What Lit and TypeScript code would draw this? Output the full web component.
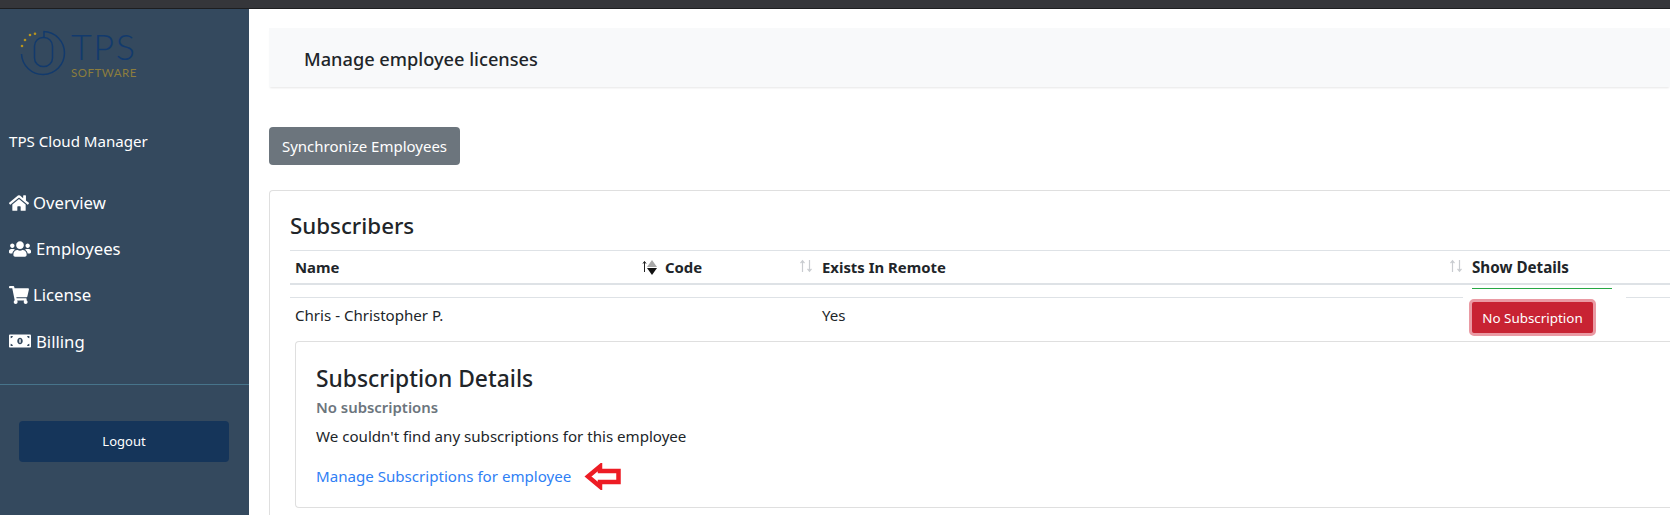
import { LitElement, html, css, svg } from "lit";
import { customElement } from "lit/decorators.js";

const home = svg`<path d="M280.37 148.26L96 300.11V464a16 16 0 0 0 16 16l112.06-.29a16 16 0 0 0 15.92-16V368a16 16 0 0 1 16-16h64a16 16 0 0 1 16 16v95.64a16 16 0 0 0 16 16.05L464 480a16 16 0 0 0 16-16V300L295.67 148.26a12.19 12.19 0 0 0-15.3 0zM571.6 251.47L488 182.56V44.05a12 12 0 0 0-12-12h-56a12 12 0 0 0-12 12v72.61L318.47 43a48 48 0 0 0-61 0L4.34 251.47a12 12 0 0 0-1.6 16.9l25.5 31A12 12 0 0 0 45.15 301l235.22-193.74a12.19 12.19 0 0 1 15.3 0L530.9 301a12 12 0 0 0 16.9-1.6l25.5-31a12 12 0 0 0-1.7-16.93z"/>`;
const users = svg`<path d="M96 224c35.3 0 64-28.7 64-64s-28.7-64-64-64-64 28.7-64 64 28.7 64 64 64zm448 0c35.3 0 64-28.7 64-64s-28.7-64-64-64-64 28.7-64 64 28.7 64 64 64zm32 32h-64c-17.6 0-33.5 7.1-45.1 18.6 40.3 22.1 68.9 62 75.1 109.4h66c17.7 0 32-14.3 32-32v-32c0-35.3-28.7-64-64-64zm-256 0c61.9 0 112-50.1 112-112S381.9 32 320 32 208 82.1 208 144s50.1 112 112 112zm76.8 32h-8.3c-20.8 10-43.9 16-68.5 16s-47.6-6-68.5-16h-8.3C179.6 288 128 339.6 128 403.2V432c0 26.5 21.5 48 48 48h288c26.5 0 48-21.5 48-48v-28.8c0-63.6-51.6-115.2-115.2-115.2zm-223.7-13.4C161.5 263.1 145.6 256 128 256H64c-35.3 0-64 28.7-64 64v32c0 17.7 14.3 32 32 32h65.9c6.3-47.4 34.9-87.3 75.2-109.4z"/>`;
const cart = svg`<path d="M528.12 301.319l47.273-208C578.806 78.301 567.391 64 551.99 64H159.208l-9.166-44.81C147.758 8.021 137.93 0 126.529 0H24C10.745 0 0 10.745 0 24v16c0 13.255 10.745 24 24 24h69.883l70.248 343.435C147.325 417.1 136 435.222 136 456c0 30.928 25.072 56 56 56s56-25.072 56-56c0-15.674-6.447-29.835-16.824-40h209.647C430.447 426.165 424 440.326 424 456c0 30.928 25.072 56 56 56s56-25.072 56-56c0-22.172-12.888-41.332-31.579-50.405l5.517-24.276c3.413-15.018-8.002-29.319-23.403-29.319H218.117l-6.545-32h293.145c11.206 0 20.92-7.754 23.403-18.681z"/>`;
const money = svg`<path d="M608 64H32C14.33 64 0 78.33 0 96v320c0 17.67 14.33 32 32 32h576c17.67 0 32-14.33 32-32V96c0-17.67-14.33-32-32-32zM48 400v-64c35.35 0 64 28.65 64 64H48zm0-224v-64h64c0 35.35-28.65 64-64 64zm272 176c-44.19 0-80-42.99-80-96 0-53.02 35.82-96 80-96s80 42.98 80 96c0 53.03-35.83 96-80 96zm272 48h-64c0-35.35 28.65-64 64-64v64zm0-224c-35.35 0-64-28.65-64-64h64v64z"/><rect x="300" y="205" width="40" height="100"/>`;

const nav = [
  { label: "Overview", vb: "0 0 576 512", w: 20, p: home, gap: 4 },
  { label: "Employees", vb: "0 0 640 512", w: 22, p: users, gap: 5 },
  { label: "License", vb: "0 0 576 512", w: 20, p: cart, gap: 4 },
  { label: "Billing", vb: "0 0 640 512", w: 22, p: money, gap: 5 },
];

const sortIdle = html`<svg class="sort" width="14" height="14" viewBox="0 0 14 14" fill="none" stroke="#c9ccd0" stroke-width="1.2">
  <path d="M3.5 13V2M1.5 4.2 3.5 1.8 5.5 4.2M10.5 1v11M8.5 9.8l2 2.4 2-2.4"/></svg>`;
const sortActive = html`<svg class="sort active" width="16" height="17" viewBox="0 0 16 17">
  <path d="M2.5 13V3M1 4.6 2.5 2.4 4 4.6" fill="none" stroke="#222" stroke-width="1"/>
  <path d="M10 1l5 7H5z" fill="#a8a8a8"/><path d="M10 16l-5-7h10z" fill="#111"/></svg>`;

@customElement("app-root")
export class AppRoot extends LitElement {
  static styles = css`
    :host { display: block; width: 1670px; height: 515px; overflow: hidden; background: #fff;
      font-family: "Noto Sans", "Open Sans", sans-serif; color: #212529; font-size: 15.1px; }
    * { box-sizing: border-box; }
    .top { height: 9px; background: #35363a; border-bottom: 1px solid #1d1e20; }
    .shell { display: flex; height: 506px; }
    .side { width: 249px; flex: none; background: #34495e; color: #fff; }
    .logo { display: flex; gap: 1px; padding: 21px 0 0 20px; height: 90px; }
    .logo-text { display: flex; flex-direction: column; }
    .tps { font: 300 36px/32px Lato, sans-serif; color: #123a6d; letter-spacing: 1.5px; height: 32px; }
    .soft { font: 400 11.5px/13px Lato, sans-serif; color: #8c7d3d; letter-spacing: .5px; margin: 4px 0 0 0; }
    .brand { padding: 32px 0 0 9px; font-size: 15.1px; line-height: 20px; height: 80.5px; }
    .nav { display: flex; flex-direction: column; }
    .nav a { display: flex; align-items: center; height: 46.2px; padding-left: 9px; font-size: 16.7px; color: #fff; }
    .nav svg { fill: #fff; flex: none; }
    .rule { height: 1px; background: #47748b; margin-top: 19.5px; }
    .logout { display: flex; align-items: center; justify-content: center; margin: 36px 0 0 19px; width: 210px; height: 41px;
      border-radius: 4px; background: #15355a; font-size: 13px; color: #fff; }
    .main { flex: 1; min-width: 0; padding: 19px 0 0 20px; }
    .hdr { height: 59px; background: #f8f9fa; box-shadow: 0 2px 2px -1px rgba(0,0,0,.1); display: flex; align-items: center;
      padding: 2px 0 0 35px; font-size: 18.2px; font-weight: 500; }
    .sync { display: flex; align-items: center; justify-content: center; margin-top: 40px; width: 191px; height: 38px;
      background: #6c757d; color: #fff; border-radius: 4px; font-size: 15px; }
    .card { margin-top: 25px; border: 1px solid #dfdfdf; border-right: 0; border-radius: 4px 0 0 4px; padding: 16px 0 0 20px; height: 340px; }
    h2 { margin: 0; font-size: 22.3px; font-weight: 500; line-height: 37px; height: 43px; }
    .thead, .tr { display: grid; grid-template-columns: 370px 157px 650px 1fr; }
    .thead { height: 35px; border-top: 1px solid #dee2e6; border-bottom: 2px solid #dee2e6; font-weight: 700; font-size: 14.9px; }
    .th { display: flex; justify-content: space-between; padding: 0 4px 0 5px; align-items: center; }
    .show { font-size: 15.2px; }
    .sort { align-self: flex-start; margin-top: 8px; }
    .sort.active { margin-right: -2px; }
    .bar { margin-left: 1182px; width: 140px; height: 1px; background: #28a745; margin-top: 3px; }
    .tr { margin-top: 8px; height: 44px; border-top: 1px solid #dee2e6; align-items: center; }
    .td { padding: 0 0 9px 5px; }
    .cta { background: #fff; width: 163px; height: 43px; margin: -1px 0 0 -4px; align-self: start; padding: 2px 0 0 6px; }
    .danger { display: flex; align-items: center; justify-content: center; width: 127px; height: 37px; background: #c82333;
      color: #fff; border: 3px solid #ea9aa3; border-radius: 5px; font-size: 13.4px; }
    .details { margin-left: 5px; border: 1px solid #dfdfdf; border-right: 0; border-radius: 4px 0 0 4px; height: 167px; padding: 21px 0 0 20px; }
    h3 { margin: 0; font-size: 22.8px; font-weight: 500; line-height: 32px; }
    .sub { font-weight: 600; color: #6c757d; font-size: 14.9px; line-height: 23px; margin-top: 1px; }
    .msg { line-height: 22px; margin-top: 6px; }
    .link-row { display: flex; align-items: center; gap: 13px; margin-top: 16px; height: 26px; }
    .link { color: #2f80f5; }
  `;

  render() {
    return html`
      <div class="top"></div>
      <div class="shell">
        <aside class="side">
          <div class="logo">
            <svg width="50" height="46" viewBox="0 0 50 46" fill="none">
              <path d="M23.5 1.5A21.5 21.5 0 1 1 1.5 24" stroke="#123a6d" stroke-width="1.5"/>
              <rect x="14.5" y="7.5" width="18" height="29" rx="8.5" stroke="#123a6d" stroke-width="1.5"/>
              <path d="M24 1.5V7.5" stroke="#123a6d" stroke-width="1.5"/>
              <g fill="#b8941f"><circle cx="2" cy="16" r="1.3"/><circle cx="5" cy="10" r="1.3"/><circle cx="10" cy="5" r="1.3"/><circle cx="15" cy="3.7" r="1.3"/></g>
            </svg>
            <div class="logo-text"><div class="tps">TPS</div><div class="soft">SOFTWARE</div></div>
          </div>
          <div class="brand">TPS Cloud Manager</div>
          <nav class="nav">
            ${nav.map(n => html`<a><svg width=${n.w} height="18" viewBox=${n.vb} style="margin-right:${n.gap}px">${n.p}</svg>${n.label}</a>`)}
          </nav>
          <div class="rule"></div>
          <div class="logout">Logout</div>
        </aside>
        <main class="main">
          <div class="hdr">Manage employee licenses</div>
          <div class="sync">Synchronize Employees</div>
          <section class="card">
            <h2>Subscribers</h2>
            <div class="thead">
              <div class="th"><span>Name</span>${sortActive}</div>
              <div class="th"><span>Code</span>${sortIdle}</div>
              <div class="th"><span>Exists In Remote</span>${sortIdle}</div>
              <div class="th show"><span>Show Details</span></div>
            </div>
            <div class="bar"></div>
            <div class="tr">
              <div class="td">Chris - Christopher P.</div>
              <div class="td"></div>
              <div class="td">Yes</div>
              <div class="cta"><div class="danger">No Subscription</div></div>
            </div>
            <div class="details">
              <h3>Subscription Details</h3>
              <div class="sub">No subscriptions</div>
              <div class="msg">We couldn't find any subscriptions for this employee</div>
              <div class="link-row">
                <span class="link">Manage Subscriptions for employee</span>
                <svg width="37" height="27" viewBox="0 0 37 27" fill="#fff" stroke="#ed1c24" stroke-width="4.5">
                  <path d="M4 13.5 16 3.5V8H34.5V19H16V23.5Z"/>
                </svg>
              </div>
            </div>
          </section>
        </main>
      </div>
    `;
  }
}
